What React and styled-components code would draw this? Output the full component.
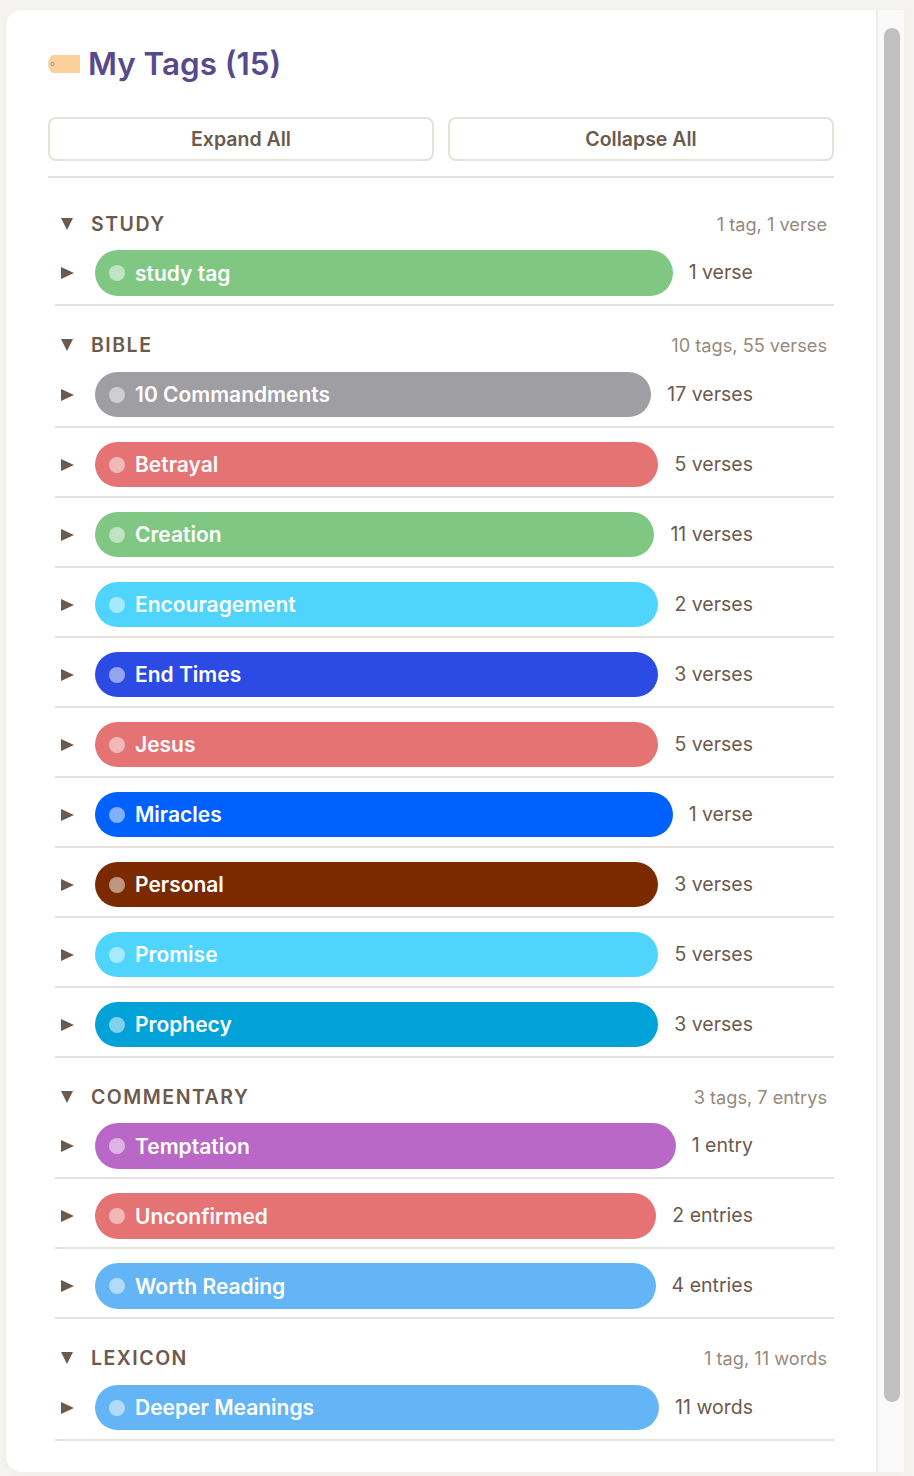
import React from "react";
import styled, { createGlobalStyle } from "styled-components";

const SECTIONS = [
  {
    name: "STUDY",
    summary: "1 tag, 1 verse",
    tags: [{ name: "study tag", color: "#81c784", count: "1 verse" }],
  },
  {
    name: "BIBLE",
    summary: "10 tags, 55 verses",
    tags: [
      { name: "10 Commandments", color: "#9e9ea3", count: "17 verses" },
      { name: "Betrayal", color: "#e57373", count: "5 verses" },
      { name: "Creation", color: "#81c784", count: "11 verses" },
      { name: "Encouragement", color: "#4fd5fd", count: "2 verses" },
      { name: "End Times", color: "#2b4be4", count: "3 verses" },
      { name: "Jesus", color: "#e57373", count: "5 verses" },
      { name: "Miracles", color: "#0061fe", count: "1 verse" },
      { name: "Personal", color: "#7b2a00", count: "3 verses" },
      { name: "Promise", color: "#4fd5fd", count: "5 verses" },
      { name: "Prophecy", color: "#00a2d8", count: "3 verses" },
    ],
  },
  {
    name: "COMMENTARY",
    summary: "3 tags, 7 entrys",
    tags: [
      { name: "Temptation", color: "#ba68c8", count: "1 entry" },
      { name: "Unconfirmed", color: "#e57373", count: "2 entries" },
      { name: "Worth Reading", color: "#64b5f6", count: "4 entries" },
    ],
  },
  {
    name: "LEXICON",
    summary: "1 tag, 11 words",
    tags: [{ name: "Deeper Meanings", color: "#64b5f6", count: "11 words" }],
  },
];

const App = () => {
  return (
    <>
      <GlobalStyle />
      <Panel>
        <Content>
          <Header>
            <TagIcon viewBox="0 0 32 20">
              <path
                d="M6 1H32V19H6Q4 19 3 18L1 14Q0 12 0 10Q0 8 1 6L3 2Q4 1 6 1Z"
                fill="#fbd09b"
              />
              <circle cx="4.5" cy="10" r="1.6" fill="#fff" stroke="#8d6e63" strokeWidth="0.8" />
            </TagIcon>
            <Title>My Tags (15)</Title>
          </Header>
          <Toolbar>
            <ToolButton>Expand All</ToolButton>
            <ToolButton>Collapse All</ToolButton>
          </Toolbar>
          {SECTIONS.map((section) => (
            <Section key={section.name}>
              <SectionHead>
                <Caret $open />
                <SectionName>{section.name}</SectionName>
                <Summary>{section.summary}</Summary>
              </SectionHead>
              {section.tags.map((tag) => (
                <Row key={tag.name}>
                  <Caret />
                  <Pill $color={tag.color}>
                    <Dot />
                    <PillName>{tag.name}</PillName>
                  </Pill>
                  <Count>{tag.count}</Count>
                </Row>
              ))}
            </Section>
          ))}
        </Content>
        <Gutter>
          <Thumb />
        </Gutter>
      </Panel>
    </>
  );
};

export default App;

const GlobalStyle = createGlobalStyle`
  html, body {
    margin: 0;
    height: 100%;
    background: #f5f3ef;
    overflow: hidden;
  }
  body {
    font-family: Inter, "Liberation Sans", sans-serif;
  }
`;
const Panel = styled.div`
  box-sizing: border-box;
  display: flex;
  width: 898px;
  height: 1462px;
  margin: 10px 0 0 6px;
  background: #fff;
  border-radius: 16px 0 0 16px;
  box-shadow: 0 2px 8px rgba(0, 0, 0, 0.03);
  overflow: hidden;
`;
const Content = styled.div`
  box-sizing: border-box;
  width: 870px;
  padding: 33px 42px 0;
`;
const Header = styled.div`
  display: flex;
  align-items: center;
  gap: 8px;
  height: 42px;
`;
const TagIcon = styled.svg`
  width: 32px;
  height: 20px;
`;
const Title = styled.h1`
  margin: 0;
  font-size: 31.4px;
  line-height: 42px;
  font-weight: 600;
  color: #574a8c;
`;
const Toolbar = styled.div`
  display: flex;
  gap: 14px;
  margin-top: 32px;
  margin-bottom: 30.25px;
  padding-bottom: 15px;
  border-bottom: 2px solid #e6e1da;
`;
const ToolButton = styled.button`
  flex: 1;
  height: 44px;
  background: #fff;
  border: 2px solid #e6e1da;
  border-radius: 8px;
  font-family: inherit;
  font-size: 19.5px;
  font-weight: 600;
  color: #6b5a4e;
`;
const Section = styled.section`
  margin-top: 23.5px;
`;
const SectionHead = styled.div`
  display: flex;
  align-items: center;
  height: 31px;
  margin-bottom: 11px;
  padding: 0 7px;
`;
const SectionName = styled.span`
  margin-left: 18px;
  font-size: 19.5px;
  font-weight: 600;
  letter-spacing: 1.5px;
  color: #6b5a4e;
`;
const Summary = styled.span`
  margin-left: auto;
  font-size: 18.2px;
  color: #97897f;
`;
const Caret = styled.span`
  flex: none;
  width: 0;
  height: 0;
  margin-left: 6px;
  ${(props) =>
    props.$open
      ? `border-left: 6px solid transparent;
         border-right: 6px solid transparent;
         border-top: 12px solid #6b5a4e;`
      : `border-top: 6px solid transparent;
         border-bottom: 6px solid transparent;
         border-left: 13px solid #6b5a4e;`}
`;
const Row = styled.div`
  display: flex;
  align-items: center;
  margin-left: 7px;
  padding: 0 81px 8.5px 0;
  border-bottom: 2px solid #e6e1da;
  & + & {
    margin-top: 14px;
  }
`;
const Pill = styled.div`
  flex: 1;
  display: flex;
  align-items: center;
  height: 45.5px;
  margin-left: 21px;
  padding-left: 14px;
  border-radius: 23px;
  background: ${(props) => props.$color};
`;
const Dot = styled.span`
  flex: none;
  width: 16px;
  height: 16px;
  border-radius: 50%;
  background: rgba(255, 255, 255, 0.5);
`;
const PillName = styled.span`
  margin-left: 10px;
  font-size: 21px;
  font-weight: 600;
  color: #fff;
`;
const Count = styled.span`
  margin-left: 16px;
  padding-bottom: 2px;
  font-size: 19.5px;
  color: #6b5a4e;
`;
const Gutter = styled.div`
  box-sizing: border-box;
  width: 28px;
  padding: 18px 4px 70px 6px;
  background: #fafafa;
  border-left: 2px solid #ececec;
`;
const Thumb = styled.div`
  width: 16px;
  height: 100%;
  border-radius: 8px;
  background: #c1c1c1;
`;
